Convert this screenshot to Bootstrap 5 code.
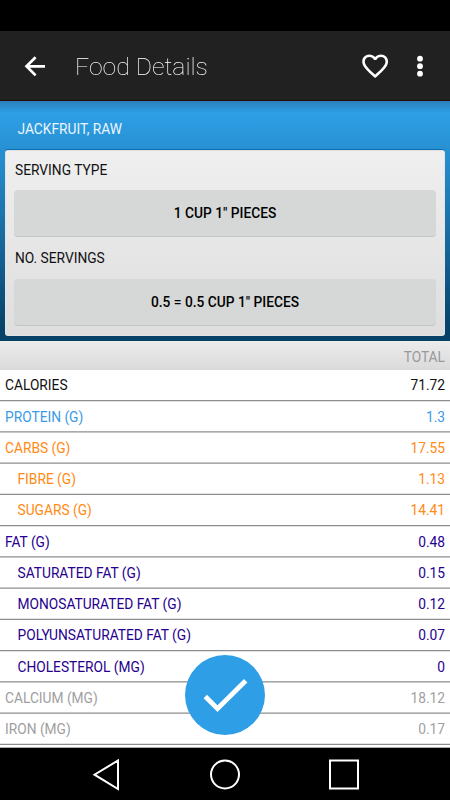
<!DOCTYPE html>
<html lang="en">
<head>
<meta charset="utf-8">
<meta name="viewport" content="width=device-width, initial-scale=1">
<title>Food Details</title>
<link href="https://cdn.jsdelivr.net/npm/bootstrap@5.3.0/dist/css/bootstrap.min.css" rel="stylesheet">
<style>
body{font-family:Roboto,"Liberation Sans",sans-serif;font-size:13.75px;line-height:20px;color:#111;text-transform:uppercase}
.screen{width:450px;height:800px}
.status{height:31px}
.appbar{height:70px;background:#212121;border-bottom:1px solid #2b0a08;padding:0 16px 0 21px}
.appbar h1{font-size:24.8px;font-weight:100;line-height:32px;text-transform:none;color:#fff;margin-left:26px;padding-top:3px;will-change:transform}
.hero{height:240px;background:linear-gradient(rgba(30,60,90,.32),rgba(30,60,90,0)) top/100% 12px no-repeat,linear-gradient(#2e9fe6 0,#2e9fe6 12px,#2790d2 50px,#064168 230px,#064168);padding:0 5px 5px}
.food-name{height:49px;padding:18px 12.5px 0;color:#eaf5fd}
.panel{height:186px;border-radius:3px;background:linear-gradient(#efefef,#dedede);border:1px solid #e4e4e4;border-top:1px solid #fff0;box-shadow:0 -1px 0 #0c6fb4;padding:9px 8px 0 8px}
.caption{padding-left:1px}
.pick{height:47px;background:#d6d8d7;border:0;border-bottom:1px solid #c3c5c4;border-radius:4px;font-weight:500;font-size:13.75px;line-height:20px;color:#000;padding:0;margin:10px 0 11px}
.pick-last{margin-top:11px}
.total{height:29px;background:linear-gradient(#ececec,#dadada);color:#999;padding:6px 5px 0}
.facts{height:378px;overflow:hidden;border-bottom:1px solid #aaa;background:repeating-linear-gradient(#c6c6c6 0,#fff .5px,#fff 29.5px,#8e8e8e 30.5px,#8e8e8e 30.75px,#c6c6c6 31.25px)}
.fact{height:31.25px;padding:.35px 5px 0;line-height:31.8px}
.sub{padding-left:17.5px}
.blue{color:#3a9ae6}.orange{color:#ff8a14}.violet{color:#26008f}.grey{color:#a0a0a0}
.confirm{left:185px;top:655px;width:80px;height:80px;background:#2e9fe6}
</style>
</head>
<body>
<main class="screen d-flex flex-column position-relative overflow-hidden bg-white">
<div class="status bg-black flex-shrink-0"></div>
<header class="appbar d-flex align-items-center flex-shrink-0">
<svg width="28" height="28" viewBox="0 0 28 28" fill="none" stroke="#fff" stroke-width="2.7"><path d="M24 14.3H6M14.6 5.2 5.5 14.3l9.1 9.1"/></svg>
<h1 class="mb-0 flex-grow-1">Food Details</h1>
<svg width="31" height="31" viewBox="-.5 -.4 24 24" fill="#fff"><path d="M16.5 3c-1.740 0-3.410.81-4.500 2.090C10.910 3.810 9.240 3 7.500 3 4.420 3 2 5.420 2 8.500c0 3.780 3.400 6.860 8.550 11.540L12 21.350l1.450-1.320C18.600 15.360 22 12.280 22 8.500 22 5.420 19.580 3 16.500 3zm-4.400 15.550l-.1.100-.1-.100C7.140 14.240 4 11.390 4 8.500 4 6.500 5.500 5 7.500 5c1.540 0 3.040.990 3.570 2.360h1.870C13.460 5.990 14.960 5 16.500 5c2 0 3.500 1.500 3.500 3.500 0 2.890-3.140 5.740-7.900 10.050z"/></svg>
<svg class="ms-3" width="28" height="30" viewBox="0 0 28 30" fill="#fff"><circle cx="14" cy="7.700" r="2.900"/><circle cx="14" cy="15.200" r="2.900"/><circle cx="14" cy="22.700" r="2.900"/></svg>
</header>
<section class="hero flex-shrink-0">
<div class="food-name">Jackfruit, raw</div>
<div class="panel d-flex flex-column">
<div class="caption">Serving type</div>
<button class="pick btn text-uppercase flex-shrink-0">1 cup 1" pieces</button>
<div class="caption">No. servings</div>
<button class="pick pick-last btn text-uppercase flex-shrink-0">0.5 = 0.5 cup 1" pieces</button>
</div>
</section>
<div class="total text-end flex-shrink-0">Total</div>
<section class="facts flex-shrink-0">
<div class="fact d-flex justify-content-between"><span>Calories</span><span>71.72</span></div>
<div class="fact blue d-flex justify-content-between"><span>Protein (g)</span><span>1.3</span></div>
<div class="fact orange d-flex justify-content-between"><span>Carbs (g)</span><span>17.55</span></div>
<div class="fact sub orange d-flex justify-content-between"><span>Fibre (g)</span><span>1.13</span></div>
<div class="fact sub orange d-flex justify-content-between"><span>Sugars (g)</span><span>14.41</span></div>
<div class="fact violet d-flex justify-content-between"><span>Fat (g)</span><span>0.48</span></div>
<div class="fact sub violet d-flex justify-content-between"><span>Saturated fat (g)</span><span>0.15</span></div>
<div class="fact sub violet d-flex justify-content-between"><span>Monosaturated fat (g)</span><span>0.12</span></div>
<div class="fact sub violet d-flex justify-content-between"><span>Polyunsaturated fat (g)</span><span>0.07</span></div>
<div class="fact sub violet d-flex justify-content-between"><span>Cholesterol (mg)</span><span>0</span></div>
<div class="fact grey d-flex justify-content-between"><span>Calcium (mg)</span><span>18.12</span></div>
<div class="fact grey d-flex justify-content-between"><span>Iron (mg)</span><span>0.17</span></div>
</section>
<nav class="bg-black flex-grow-1">
<svg class="d-block" width="450" height="52" fill="none" stroke="#fff" stroke-width="2"><path d="M118 12.500v28.500L94.500 26.700z"/><circle cx="225" cy="26.500" r="14"/><path d="M330 12.500h28v28h-28z"/></svg>
</nav>
<button class="confirm btn rounded-circle border-0 p-0 position-absolute" aria-label="Confirm"><svg class="d-block" width="80" height="80" fill="none" stroke="#fff" stroke-width="4.800"><path d="M20.300 41.500 32.500 53.700 60.700 25.700"/></svg></button>
</main>
<script src="https://cdn.jsdelivr.net/npm/bootstrap@5.3.0/dist/js/bootstrap.bundle.min.js"></script>
</body>
</html>
